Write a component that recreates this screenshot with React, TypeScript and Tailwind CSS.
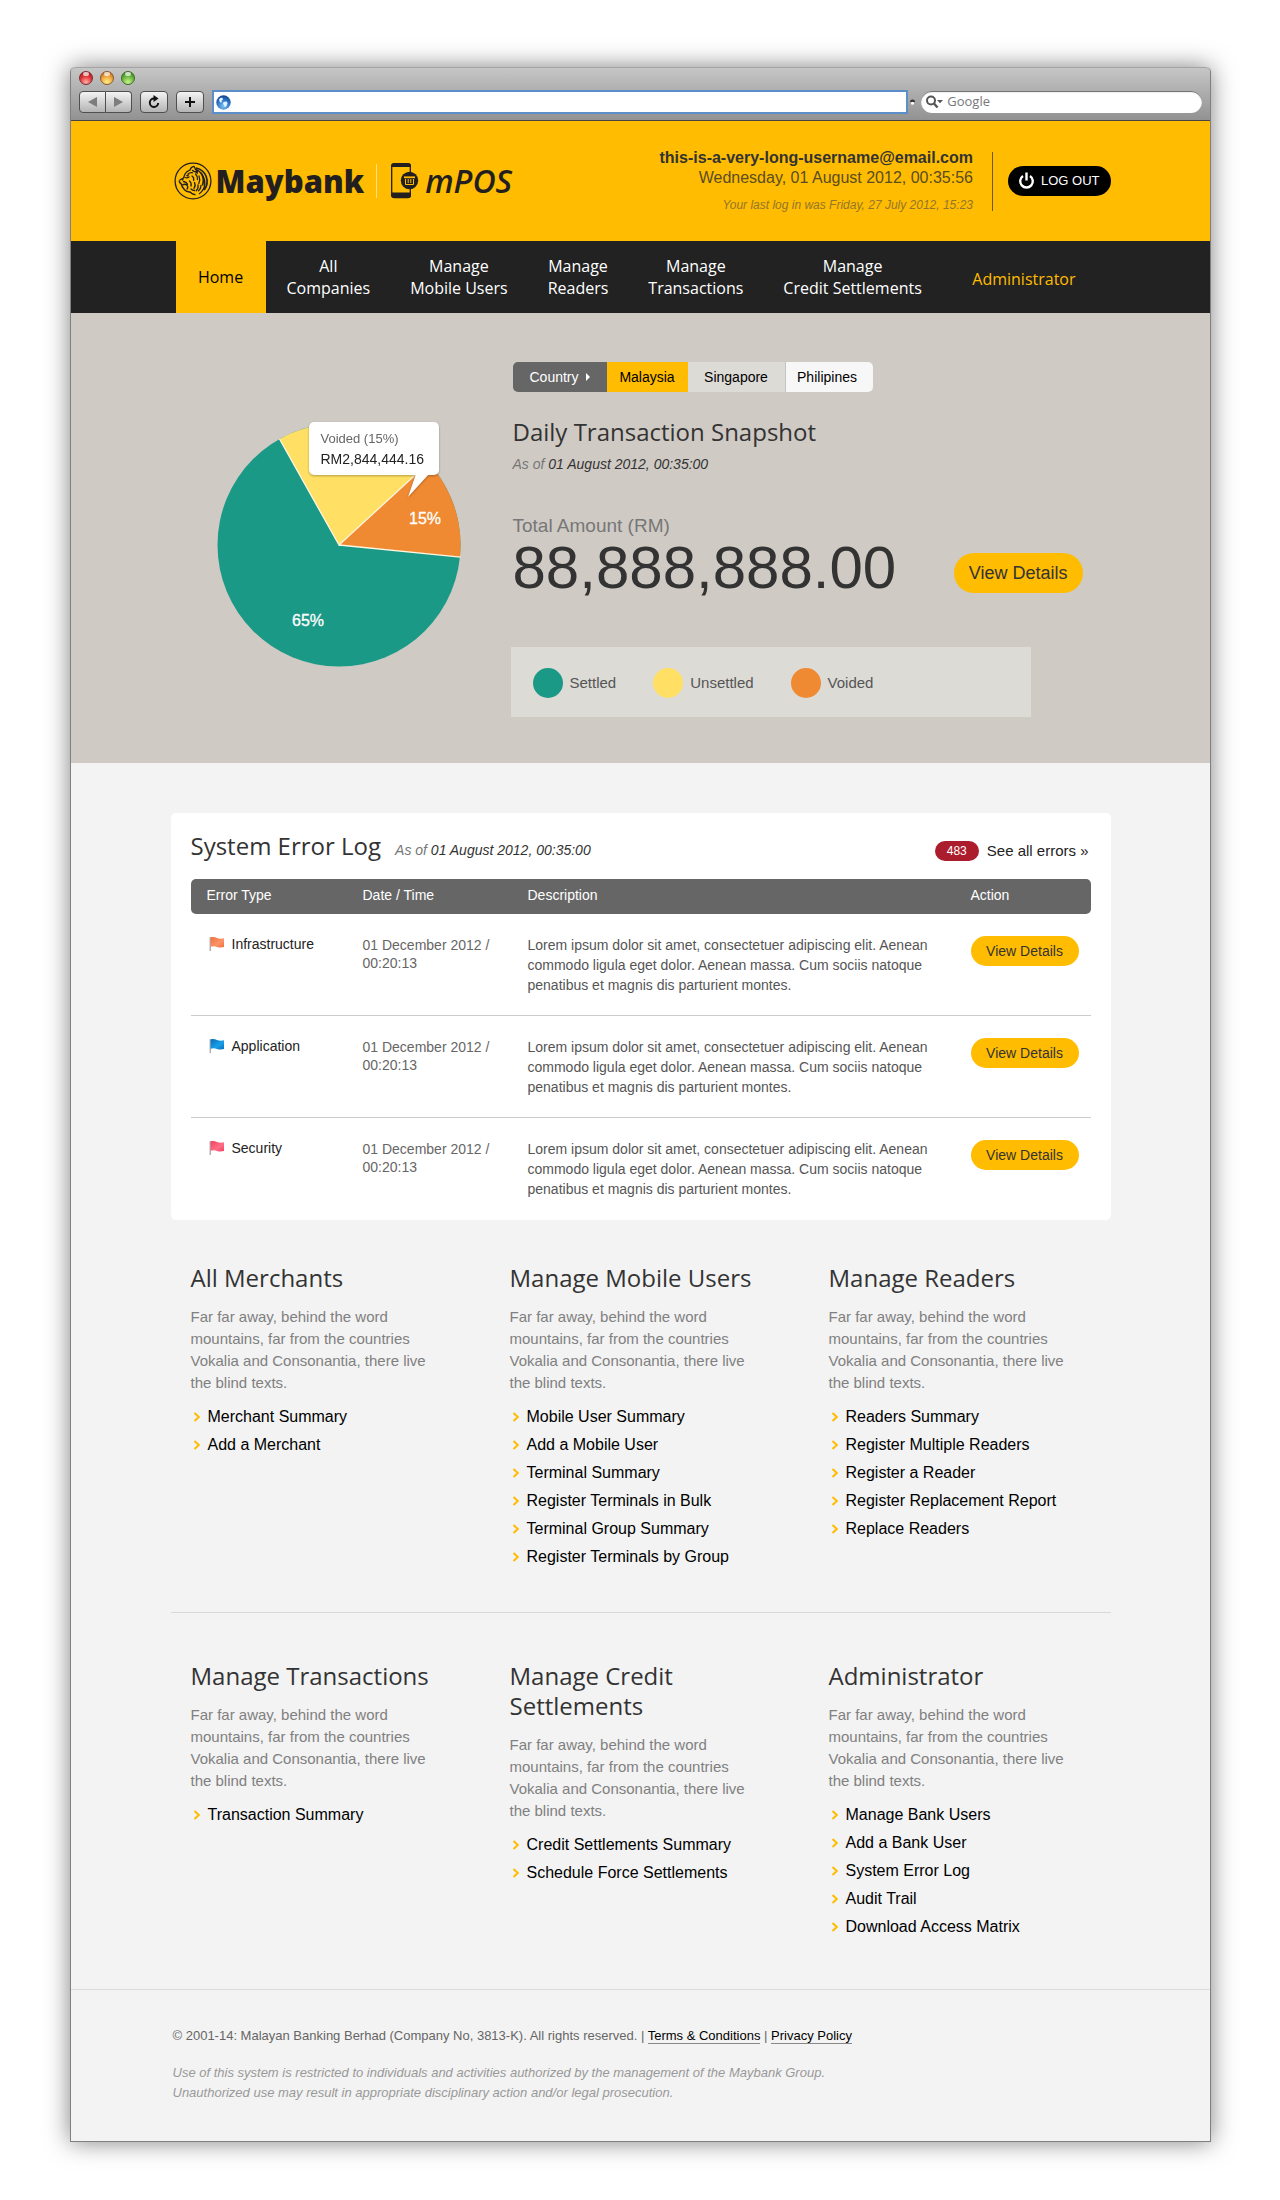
import React from "react";

const FlagIcon = ({ from, to }: { from: string; to: string }) => {
  const id = `flag-${to.slice(1)}`;
  return (
    <svg width="16" height="16" viewBox="0 0 16 16" aria-hidden="true" className="shrink-0">
      <defs>
        <linearGradient id={id} x1="0" y1="0" x2="1" y2="1">
          <stop offset="0" stopColor={from} />
          <stop offset="0.6" stopColor={to} />
          <stop offset="1" stopColor={from} />
        </linearGradient>
      </defs>
      <path d="M1.2 1.2V15" stroke="#8a8a8a" strokeWidth="1" />
      <path d="M1.6 1.6C4 0.6 6 1.2 8 2s4.500 1 7 0.300V11c-2.500 0.700-5 0.600-7-0.100s-4-1-6.400-0.100Z" fill={`url(#${id})`} />
    </svg>
  );
};

const TigerEmblem = () => (
  <svg width="38" height="38" viewBox="0 0 38 38" fill="none" stroke="#231f20" aria-hidden="true" className="shrink-0">
    <circle cx="19" cy="19" r="17.900" strokeWidth="1.300" />
    <path d="M5.500 18.500c1-1.500 2.500-2 4-2.500l1.500-4c1-2 3-3.200 5-4 .5-2 2-3.400 4-3.600.8.7 1.200 1.700 1.400 3 3 .8 5 2.500 6.600 5 1.800 2.600 3 6 2.800 9.600-.3 4-2.300 7.500-5.800 10" strokeWidth="1.300" />
    <path d="M22 6c4.500 1 8.500 4 10.200 8.500 1.600 4.500 1 9.500-2 13.500M27 11c2.500 3.500 3 8 1.500 12.500" strokeWidth="1.700" />
    <path d="M5.500 18.500c-.4 1.500.3 2.500 1.500 3 .6 2.500 1.800 4.500 3.500 6.300 1.500 1.700 3.500 2.400 5.500 2.200 1.500 1.600 3.500 2.500 5.500 2.800" strokeWidth="1.400" />
    <path d="M11 15.500c1.500.6 2.600.6 4-.5M14 12c1.500-1.300 3-1.600 4.500-1.200M18 14c1.500 1 2 2.500 1.600 4.300M9.500 19.500c2 .3 3.400 1.200 4 3M8.500 23c1.500-1 3-1 4.300.1 1.200 1.200 1.200 2.900.2 4M15.500 19c1.500 1.200 2 3 1.500 5M18.500 8.500c1 1 2.500 1.500 4 1.200M21.500 12c1.500 1.500 2.200 3.300 2 5.500M25 14c1 2.500 1 5-.2 7.500M20.500 20.500c1 2 .8 4-.5 6M24 23c.5 2-.2 4-1.800 5.700M27 23.500c0 2-1 4-2.500 5.300M17 27c1 1 2 1.500 3.500 1.500" strokeWidth="1.300" strokeLinecap="round" />
    <path d="M12 13.500l3-1-1 2zM7 17.500l2.500-.8-.6 1.700zM22 7.500l2 1.500-.5 3-1.800-1.500z" fill="#231f20" strokeWidth="0.400" />
  </svg>
);

const PhoneLogo = () => (
  <svg width="28" height="36" viewBox="0 0 28 36" aria-hidden="true" className="shrink-0">
    <rect x="0.700" y="1" width="18.600" height="33.600" rx="2.600" fill="none" stroke="#231f20" strokeWidth="1.300" />
    <path d="M0 4V3a3 3 0 0 1 3-3h14a3 3 0 0 1 3 3v1zM0 29.500h20V32a3 3 0 0 1-3 3H3a3 3 0 0 1-3-3z" fill="#231f20" />
    <circle cx="18.500" cy="17.500" r="8.700" fill="#231f20" />
    <path d="M13 14.300h11" stroke="#ffbc00" strokeWidth="1.800" />
    <path d="M14.500 16v5.500h8V16M17.200 16v4M19.800 16v4" fill="none" stroke="#ffbc00" strokeWidth="1" />
  </svg>
);

const NavChevron = () => (
  <svg width="8" height="10" viewBox="0 0 8 10" fill="none" aria-hidden="true" className="shrink-0">
    <path d="M1.500 1L5.800 5 1.500 9" stroke="#ffbc00" strokeWidth="2" />
  </svg>
);

const lights = [
  "bg-[radial-gradient(circle_at_50%_85%,#ffb0a8_0%,#e3363a_50%,#8e1417_100%)] border-[#7c2a2a]",
  "bg-[radial-gradient(circle_at_50%_85%,#fff08a_0%,#f0a640_50%,#a85512_100%)] border-[#8a5a28]",
  "bg-[radial-gradient(circle_at_50%_85%,#ccf590_0%,#6ab83c_50%,#2f6d18_100%)] border-[#3f6a28]",
];

const toolButton =
  "flex h-[22px] items-center justify-center border border-[#4f4f4f] bg-linear-to-b from-[#f4f4f4] to-[#b4b4b4]";

const BrowserChrome = () => (
  <div className="h-[54px] rounded-t-[5px] border-t border-b border-t-[#a4a4a4] border-b-[#454545] bg-linear-to-b from-[#c6c6c6] to-[#929292] px-2">
    <div className="flex gap-[7px] pt-[3px]">
      {lights.map((c) => (
        <span key={c} className={`relative size-[14px] rounded-full border ${c}`}>
          <span className="absolute top-0 left-[3px] h-1 w-1.5 rounded-full bg-white/70" />
        </span>
      ))}
    </div>
    <div className="mt-1.5 flex items-center">
      <button aria-label="Back" className={`${toolButton} w-[27px] rounded-l`}>
        <svg width="9" height="10" viewBox="0 0 9 10"><path d="M9 0v10L0 5z" fill="#7d7d7d" /></svg>
      </button>
      <button aria-label="Forward" className={`${toolButton} w-[26px] rounded-r border-l-0`}>
        <svg width="9" height="10" viewBox="0 0 9 10"><path d="M0 0v10l9-5z" fill="#7d7d7d" /></svg>
      </button>
      <button aria-label="Reload" className={`${toolButton} ml-2 w-7 rounded`}>
        <svg width="14" height="14" viewBox="0 0 14 14" fill="none">
          <path d="M8.500 3.500H7A4.200 4.200 0 1 0 11.200 8" stroke="#111" strokeWidth="2" />
          <path d="M6.500 0l5 3.600-5 3.400z" fill="#111" />
        </svg>
      </button>
      <button aria-label="Add bookmark" className={`${toolButton} ml-2 w-7 rounded`}>
        <svg width="12" height="12" viewBox="0 0 12 12"><path d="M6 1v10M1 6h10" stroke="#111" strokeWidth="2" /></svg>
      </button>
      <div className="ml-2.5 flex h-5 flex-1 items-center bg-white pl-0.5 ring-2 ring-[#5a8fca]">
        <svg width="15" height="15" viewBox="0 0 15 15" aria-hidden="true">
          <defs>
            <radialGradient id="globe" cx="0.5" cy="0.75" r="0.7">
              <stop offset="0" stopColor="#7fc4f5" />
              <stop offset="0.6" stopColor="#2f76c8" />
              <stop offset="1" stopColor="#164a92" />
            </radialGradient>
          </defs>
          <circle cx="7.500" cy="7.500" r="7.200" fill="url(#globe)" />
          <path d="M3 4.500c1-1.500 2.500-2 3.500-1.500l.5 1.500-1.500 1.200.5 1.300-2 .5zM7.500 7l3-.5 1 1.500-1 3-1.800 1.200-.7-2.200-1-1z" fill="#e4f3ff" />
        </svg>
        <input aria-label="Address" className="h-full min-w-0 flex-1 bg-transparent px-1 text-[12px] outline-none" />
      </div>
      <svg width="5" height="6" viewBox="0 0 5 6" className="mr-1.5 ml-1" aria-hidden="true">
        <path d="M0 3a2.500 2.500 0 0 1 5 0z" fill="#333" /><circle cx="2.500" cy="4.200" r="1.500" fill="#fff" />
      </svg>
      <label className="flex h-[22px] w-[25%] items-center rounded-full bg-white pl-1 shadow-[inset_0_1px_1px_#666]">
        <svg width="18" height="14" viewBox="0 0 18 14" fill="none" aria-hidden="true">
          <circle cx="6" cy="5.500" r="4" stroke="#555" strokeWidth="2" />
          <path d="M9 8.500l3.500 4" stroke="#555" strokeWidth="2.400" />
          <path d="M12 5h6l-3 3.200z" fill="#555" />
        </svg>
        <input aria-label="Search" placeholder="Google" className="ml-1 min-w-0 flex-1 bg-transparent font-['Open_Sans',sans-serif] text-[13px] text-[#666] outline-none placeholder:text-[#777]" />
      </label>
    </div>
  </div>
);

const heading = "font-['Open_Sans',sans-serif] text-[24px] leading-[30px] text-[#333]";

const SiteHeader = () => (
  <header className="bg-[#ffbc00]">
    <div className="mx-auto flex h-[120px] max-w-[940px] items-center">
      <div className="flex items-center pl-[3px] text-[#231f20]">
        <TigerEmblem />
        <span className="ml-1 font-['Open_Sans',sans-serif] text-[31px] leading-[36px] font-extrabold">Maybank</span>
        <span className="ml-3 h-[34px] w-px bg-[#ffe08a]" />
        <span className="ml-3.5"><PhoneLogo /></span>
        <span className="ml-1.5 font-['Open_Sans',sans-serif] text-[32px] leading-[36px] font-semibold italic">mPOS</span>
      </div>
      <div className="ml-auto text-right">
        <p className="text-[16px] leading-[20px] font-bold text-[#333]">this-is-a-very-long-username@email.com</p>
        <p className="text-[16px] leading-[20px] text-[#5a4c22]">Wednesday, 01 August 2012, 00:35:56</p>
        <p className="mt-2 text-[12px] leading-[18px] text-[#94752c] italic">Your last log in was Friday, 27 July 2012, 15:23</p>
      </div>
      <span className="ml-[19px] h-[59px] w-px bg-[#6b5a30]" />
      <button className="ml-[15px] flex h-[30px] items-center gap-1.5 rounded-full bg-black pr-[11px] pl-2.5 text-[13px] text-white">
        <svg width="17" height="18" viewBox="0 0 17 18" fill="none" stroke="#fff" aria-hidden="true">
          <path d="M5 4A6.300 6.300 0 1 0 12 4" strokeWidth="2.400" />
          <path d="M8.500 0.500v8" strokeWidth="2.400" />
        </svg>
        LOG OUT
      </button>
    </div>
  </header>
);

const navItems = [
  ["All", "Companies"],
  ["Manage", "Mobile Users"],
  ["Manage", "Readers"],
  ["Manage", "Transactions"],
  ["Manage", "Credit Settlements"],
];

const SiteNav = () => (
  <nav className="bg-[#222] font-['Open_Sans',sans-serif] text-[16px] leading-[22px] text-white">
    <div className="mx-auto flex h-[72px] max-w-[940px] pr-[35px] pl-[5px]">
      <a href="#home" className="flex w-[90px] shrink-0 items-center justify-center bg-[#ffbc00] font-medium text-black">Home</a>
      <div className="flex flex-1 items-center gap-10 pl-[21px]">
        {navItems.map(([a, b]) => (
          <a key={b} href={`#${b.toLowerCase().replace(" ", "-")}`} className="text-center whitespace-nowrap">
            {a}
            <br />
            {b}
          </a>
        ))}
        <a href="#administrator" className="ml-auto pt-1 text-[#ffbc00]">Administrator</a>
      </div>
    </div>
  </nav>
);

const PieChart = () => (
  <div className="relative w-[244px]">
    <svg viewBox="-122 -122 244 244" width="244" height="244" role="img" aria-label="Settled 65%, unsettled 20%, voided 15%">
      <circle r="121.500" fill="#1b9987" />
      <path d="M0 0L-59.500-106A121.500 121.500 0 0 1 89.500-82.200Z" fill="#ffe064" />
      <path d="M0 0L89.500-82.200A121.500 121.500 0 0 1 121 12Z" fill="#f08a32" />
      <path d="M-59.500-106L0 0L89.500-82.200M0 0L121.500 12.200" fill="none" stroke="#fff6e0" strokeWidth="1.300" />
      <text x="86" y="-21" textAnchor="middle" fontSize="16" fill="#fff" stroke="#fff" strokeWidth="0.300">15%</text>
      <text x="-31" y="81" textAnchor="middle" fontSize="16" fill="#fff" stroke="#fff" strokeWidth="0.300">65%</text>
    </svg>
    <div className="absolute top-[-1px] left-[92px] w-[130px] rounded-[5px] bg-white pt-[7px] pb-[6px] pl-3 whitespace-nowrap drop-shadow-[0_1px_1px_rgba(0,0,0,0.3)]">
      <p className="text-[13px] leading-[20px] text-[#666]">Voided (15%)</p>
      <p className="text-[14px] leading-[20px] text-[#222]">RM2,844,444.16</p>
      <svg width="24" height="24" viewBox="0 0 24 24" className="absolute top-[52px] left-[98px]" aria-hidden="true">
        <path d="M9 0L1 23 22 0z" fill="#fff" />
      </svg>
    </div>
  </div>
);

const legend = [
  ["Settled", "bg-[#1b9987]"],
  ["Unsettled", "bg-[#ffe064]"],
  ["Voided", "bg-[#f08a32]"],
];

const AsOf = () => (
  <p className="text-[14px] leading-[20px] text-[#777] italic">
    As of <time className="text-[#333]">01 August 2012, 00:35:00</time>
  </p>
);

const Snapshot = () => (
  <section className="bg-[#cfcac4]">
    <div className="mx-auto flex max-w-[940px] pt-[49px] pb-[46px]">
      <div className="w-[342px] shrink-0 pt-[61px] pl-[46px]">
        <PieChart />
      </div>
      <div className="min-w-0 flex-1">
        <div className="flex h-[30px] w-[360px] overflow-hidden rounded-[5px] text-[14px] text-black">
          <span className="flex w-[94px] items-center justify-center gap-[7px] bg-[#666] text-white">
            Country
            <svg width="4" height="8" viewBox="0 0 4 8" aria-hidden="true"><path d="M0 0l4 4-4 4z" fill="#fff" /></svg>
          </span>
          <button className="w-[81px] bg-[#ffbc00]">Malaysia</button>
          <button className="w-[98px] border-r border-[#c4c4c4] bg-[#dddbd6]">Singapore</button>
          <button className="flex-1 bg-[#f7f7f7] pr-1">Philipines</button>
        </div>
        <h1 className={`${heading} mt-[25px]`}>Daily Transaction Snapshot</h1>
        <div className="mt-[7px]"><AsOf /></div>
        <p className="mt-10 text-[19px] leading-[24px] text-[#777]">Total Amount (RM)</p>
        <div className="flex items-end justify-between pr-7">
          <p className="text-[60px] leading-[60px] text-[#333]">88,888,888.00</p>
          <button className="mb-[5px] h-10 rounded-full bg-[#ffbc00] px-[15px] text-[18px] text-[#333]">View Details</button>
        </div>
        <ul className="mt-[49px] mr-[80px] ml-[-2px] flex h-[70px] items-center gap-[37px] bg-[#dddbd6] pt-0.5 pl-[22px] text-[15px] text-[#555]">
          {legend.map(([label, color]) => (
            <li key={label} className="flex items-center gap-[7px]">
              <span className={`size-[30px] rounded-full ${color}`} />
              {label}
            </li>
          ))}
        </ul>
      </div>
    </div>
  </section>
);

const errors = [
  { type: "Infrastructure", from: "#f2703a", to: "#fb9468" },
  { type: "Application", from: "#0a6db8", to: "#17a0ea" },
  { type: "Security", from: "#f4405e", to: "#ff6f86" },
];

const ErrorLog = () => (
  <section className="rounded-[5px] bg-white px-5">
    <div className="flex h-[66px] items-baseline pt-[18px]">
      <h2 className={heading}>System Error Log</h2>
      <div className="ml-3.5"><AsOf /></div>
      <div className="ml-auto flex items-center gap-2 pr-0.5">
        <span className="h-5 w-11 rounded-full bg-[#ab1d2d] text-center text-[12px] leading-[20px] text-white">483</span>
        <a href="#errors" className="text-[15px] leading-[20px] text-[#222]">See all errors »</a>
      </div>
    </div>
    <table className="w-full table-fixed border-separate border-spacing-0 text-left text-[14px]">
      <thead>
        <tr className="h-[35px] text-white [&>th]:bg-[#666] [&>th]:pb-0.5 [&>th]:font-normal">
          <th className="w-[172px] rounded-l-[5px] pl-4">Error Type</th>
          <th className="w-[165px]">Date / Time</th>
          <th>Description</th>
          <th className="w-[120px] rounded-r-[5px]">Action</th>
        </tr>
      </thead>
      <tbody>
        {errors.map((e) => (
          <tr key={e.type} className="h-[102px] align-top [&>td]:border-b [&>td]:border-[#ccc] last:[&>td]:border-0">
            <td className="pt-[20px] pl-[18px]">
              <span className="flex items-center gap-[7px] leading-[20px] text-[#222]">
                <FlagIcon from={e.from} to={e.to} />
                {e.type}
              </span>
            </td>
            <td className="pt-[22px] pr-6 leading-[18px] text-[#666]">01 December 2012 / 00:20:13</td>
            <td className="pt-[21px] pr-5 leading-[20px] text-[#555]">
              Lorem ipsum dolor sit amet, consectetuer adipiscing elit. Aenean commodo ligula eget dolor. Aenean massa. Cum
              sociis natoque penatibus et magnis dis parturient montes.
            </td>
            <td className="pt-[22px]">
              <button className="h-[30px] w-[108px] rounded-full bg-[#ffbc00] text-[#333]">View Details</button>
            </td>
          </tr>
        ))}
      </tbody>
    </table>
  </section>
);

const groups = [
  [
    { title: "All Merchants", links: ["Merchant Summary", "Add a Merchant"] },
    {
      title: "Manage Mobile Users",
      links: [
        "Mobile User Summary",
        "Add a Mobile User",
        "Terminal Summary",
        "Register Terminals in Bulk",
        "Terminal Group Summary",
        "Register Terminals by Group",
      ],
    },
    {
      title: "Manage Readers",
      links: [
        "Readers Summary",
        "Register Multiple Readers",
        "Register a Reader",
        "Register Replacement Report",
        "Replace Readers",
      ],
    },
  ],
  [
    { title: "Manage Transactions", links: ["Transaction Summary"] },
    { title: "Manage Credit Settlements", links: ["Credit Settlements Summary", "Schedule Force Settlements"] },
    {
      title: "Administrator",
      links: ["Manage Bank Users", "Add a Bank User", "System Error Log", "Audit Trail", "Download Access Matrix"],
    },
  ],
];

const GroupRow = ({ items }: { items: { title: string; links: string[] }[] }) => (
  <div className="grid grid-cols-3 gap-x-[69px] pr-8 pl-5">
    {items.map((g) => (
      <section key={g.title}>
        <h2 className={heading}>{g.title}</h2>
        <p className="mt-[13px] text-[15px] leading-[22px] text-[#808080]">
          Far far away, behind the word mountains, far from the countries Vokalia and Consonantia, there live the blind
          texts.
        </p>
        <ul className="mt-[9px] text-[16px] leading-[28px] text-black">
          {g.links.map((l) => (
            <li key={l}>
              <a href="#" className="flex items-center gap-[7px] pl-0.5 whitespace-nowrap">
                <NavChevron />
                {l}
              </a>
            </li>
          ))}
        </ul>
      </section>
    ))}
  </div>
);

export default function App() {
  return (
    <div className="bg-white pt-[67px] pr-[69px] pb-[59px] pl-[70px] font-['Liberation_Sans',Arial,sans-serif]">
      <div className="rounded-t-[5px] border-x border-b border-[#808080] bg-[#f3f3f3] shadow-[0_0_24px_rgba(0,0,0,0.5)]">
        <BrowserChrome />
        <SiteHeader />
        <SiteNav />
        <Snapshot />
        <main className="mx-auto max-w-[940px] pt-[50px] pb-[48px]">
          <ErrorLog />
          <div className="border-b border-[#d8d8d8] pt-[43px] pb-[41px]">
            <GroupRow items={groups[0]} />
          </div>
          <div className="pt-[48px]">
            <GroupRow items={groups[1]} />
          </div>
        </main>
        <footer className="border-t border-[#dcdcdc] text-[13px] leading-[20px]">
          <div className="mx-auto max-w-[940px] px-0.5 pt-[36px] pb-[38px]">
            <p className="text-[#666]">
              © 2001-14: Malayan Banking Berhad (Company No, 3813-K). All rights reserved. |{" "}
              <a href="#terms" className="border-b border-[#888] text-black">Terms &amp; Conditions</a> |{" "}
              <a href="#privacy" className="border-b border-[#888] text-black">Privacy Policy</a>
            </p>
            <p className="mt-[17px] text-[#999] italic">
              Use of this system is restricted to individuals and activities authorized by the management of the Maybank
              Group.
              <br />
              Unauthorized use may result in appropriate disciplinary action and/or legal prosecution.
            </p>
          </div>
        </footer>
      </div>
    </div>
  );
}
